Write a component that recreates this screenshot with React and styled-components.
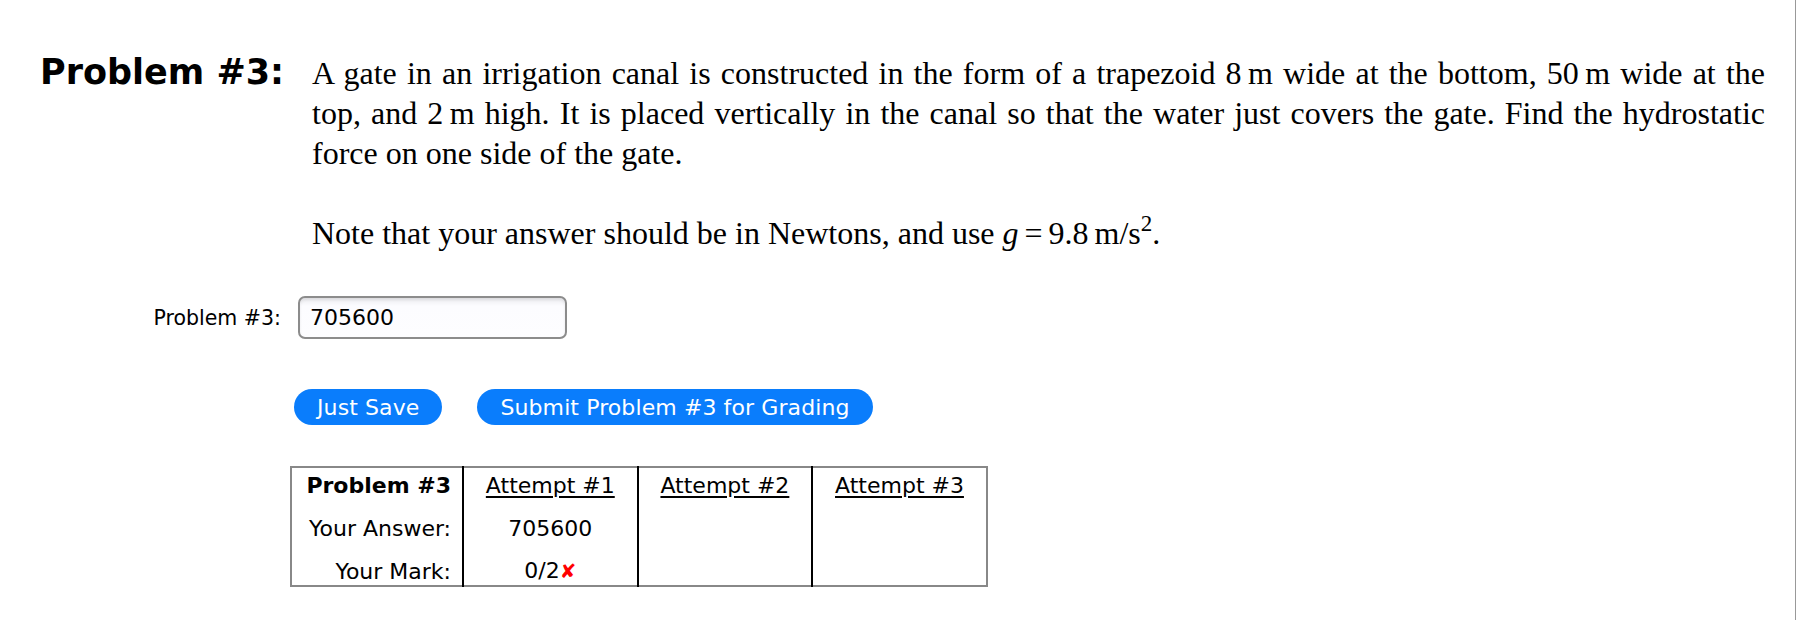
import React from "react";
import styled, { createGlobalStyle } from "styled-components";

const GlobalStyle = createGlobalStyle`
  html, body {
    margin: 0;
    padding: 0;
    background: #fff;
    color: #000;
  }
  body {
    font-family: "DejaVu Sans", Verdana, sans-serif;
  }
`;

const Page = styled.div`
  width: 1796px;
  min-height: 620px;
  box-sizing: border-box;
  border-right: 1px solid #999;
  padding: 52px 0 0 40px;
`;

const ProblemRow = styled.div`
  display: grid;
  grid-template-columns: 272px 1453px;
  align-items: baseline;
`;

const ProblemTitle = styled.h2`
  margin: 0;
  font-family: "DejaVu Sans", Verdana, sans-serif;
  font-weight: bold;
  font-size: 35px;
  line-height: 40px;
  white-space: nowrap;
`;

const Statement = styled.div`
  font-family: "Liberation Serif", "Times New Roman", "DejaVu Serif", serif;
  font-size: 32px;
  line-height: 40px;
`;

const Para = styled.p`
  margin: 0 0 ${(p) => (p.$last ? "0" : "40px")} 0;
  text-align: justify;
`;

const Formula = styled.span`
  white-space: nowrap;
  word-spacing: -2px;
`;

const MathVar = styled.i`
  font-style: italic;
`;

const Sup = styled.sup`
  font-size: 0.72em;
  line-height: 0;
  vertical-align: 0.55em;
`;

const AnswerRow = styled.div`
  display: grid;
  grid-template-columns: 258px auto;
  align-items: center;
  margin-top: 43px;
`;

const AnswerLabel = styled.label`
  text-align: right;
  padding-right: 17px;
  font-size: 20.5px;
`;

const AnswerInput = styled.input`
  box-sizing: border-box;
  width: 269px;
  height: 43px;
  padding: 0 10px;
  border: 2px solid #8c8c8c;
  border-radius: 7px;
  background: linear-gradient(#ececf0 0px, #fcfcff 8px, #fdfdff 100%);
  box-shadow: inset 0 2px 3px rgba(0, 0, 0, 0.08);
  font-family: "DejaVu Sans", Verdana, sans-serif;
  font-size: 22px;
  color: #000;
  outline: none;
`;

const ButtonRow = styled.div`
  display: flex;
  gap: 35px;
  margin: 50px 0 0 254px;
`;

const PillButton = styled.button`
  height: 36px;
  padding: 0 23px;
  border: none;
  border-radius: 18px;
  background: #0a7dfc;
  color: #fff;
  font-family: "DejaVu Sans", Verdana, sans-serif;
  font-size: 22px;
  letter-spacing: 0.1px;
  cursor: pointer;
`;

const Attempts = styled.table`
  margin: 41px 0 0 250px;
  border-collapse: collapse;
  border: 2px solid #888;
  font-size: 22px;
  line-height: 25px;

  td, th {
    padding: 5px 11px 12.5px;
    border-left: 2px solid #000;
    white-space: nowrap;
  }
  td:first-child, th:first-child {
    border-left: none;
    width: 148px;
    text-align: right;
  }
  tr:last-child td {
    padding-bottom: 1px;
  }
`;

const AttemptCol = styled.th`
  width: 150.6px;
  font-weight: normal;
  text-align: center;
  text-decoration: underline;
  text-underline-offset: 3px;
`;

const Cell = styled.td`
  text-align: center;
`;

const HeadCell = styled.th`
  font-weight: bold;
`;

const Wrong = styled.span`
  color: #f00;
  font-weight: bold;
  font-size: 0.9em;
`;

const statement =
  "A gate in an irrigation canal is constructed in the form of a trapezoid 8\u202Fm wide at the " +
  "bottom, 50\u202Fm wide at the top, and 2\u202Fm high. It is placed vertically in the canal so " +
  "that the water just covers the gate. Find the hydrostatic force on one side of the gate.";

export default function App() {
  return (
    <>
      <GlobalStyle />
      <Page>
        <ProblemRow>
          <ProblemTitle>Problem #3:</ProblemTitle>
          <Statement>
            <Para>{statement}</Para>
            <Para $last>
              Note that your answer should be in Newtons, and use{" "}
              <Formula>
                <MathVar>g</MathVar> = 9.8 m/s<Sup>2</Sup>.
              </Formula>
            </Para>
          </Statement>
        </ProblemRow>

        <AnswerRow>
          <AnswerLabel htmlFor="answer3">Problem #3:</AnswerLabel>
          <AnswerInput id="answer3" defaultValue="705600" />
        </AnswerRow>

        <ButtonRow>
          <PillButton>Just Save</PillButton>
          <PillButton>Submit Problem #3 for Grading</PillButton>
        </ButtonRow>

        <Attempts>
          <tbody>
            <tr>
              <HeadCell>Problem #3</HeadCell>
              <AttemptCol>Attempt #1</AttemptCol>
              <AttemptCol>Attempt #2</AttemptCol>
              <AttemptCol>Attempt #3</AttemptCol>
            </tr>
            <tr>
              <td>Your Answer:</td>
              <Cell>705600</Cell>
              <Cell />
              <Cell />
            </tr>
            <tr>
              <td>Your Mark:</td>
              <Cell>
                0/2<Wrong>✘</Wrong>
              </Cell>
              <Cell />
              <Cell />
            </tr>
          </tbody>
        </Attempts>
      </Page>
    </>
  );
}
